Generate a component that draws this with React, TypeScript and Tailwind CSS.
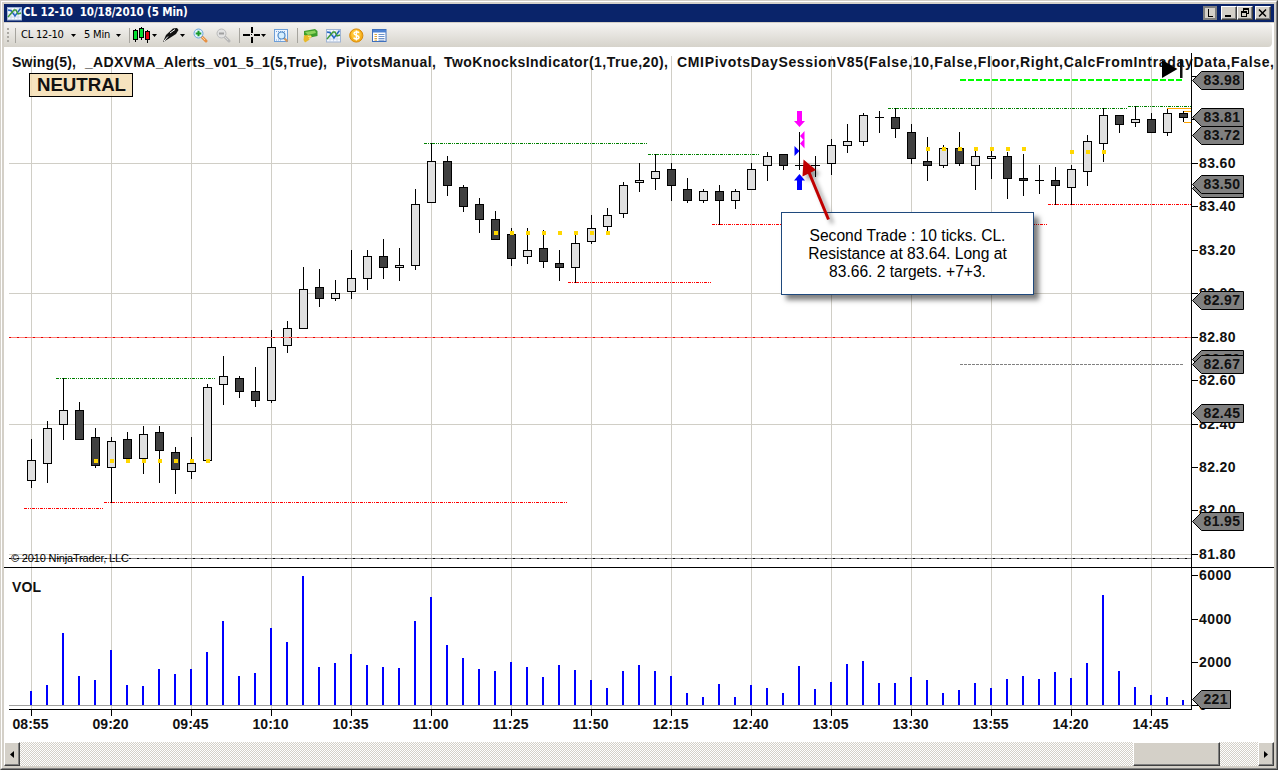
import React from "react";

type Candle = [number, number, number, number, 0 | 1 | 2];

// high, body top, body bottom, low, kind (0 = up, 1 = down, 2 = doji)
const CANDLES: Candle[] = [
  [439, 460, 481, 488, 0], [421, 428, 464, 483, 0], [378, 410, 425, 440, 0], [402, 410, 440, 440, 1],
  [428, 437, 466, 468, 1], [437, 441, 468, 503, 0], [432, 439, 459, 459, 1], [426, 434, 459, 474, 0],
  [426, 432, 451, 483, 1], [447, 452, 470, 494, 1], [437, 463, 472, 479, 0], [384, 387, 461, 461, 0],
  [356, 376, 385, 405, 0], [376, 378, 392, 398, 1], [367, 391, 401, 407, 1], [330, 347, 401, 403, 0],
  [321, 328, 346, 353, 0], [267, 289, 329, 329, 0], [269, 287, 299, 307, 1], [280, 293, 299, 301, 0],
  [250, 278, 292, 299, 0], [250, 256, 279, 290, 0], [239, 256, 268, 279, 1], [248, 265, 268, 281, 0],
  [189, 204, 266, 270, 0], [143, 161, 203, 203, 0], [156, 161, 186, 196, 1], [185, 187, 207, 212, 1],
  [198, 204, 220, 233, 1], [211, 219, 240, 240, 1], [228, 234, 259, 266, 1], [228, 250, 257, 264, 0],
  [230, 248, 262, 268, 1], [250, 263, 268, 281, 1], [233, 243, 268, 283, 0], [215, 228, 242, 244, 0],
  [208, 215, 227, 231, 0], [182, 185, 214, 218, 0], [163, 180, 183, 192, 0], [154, 171, 179, 190, 0],
  [163, 169, 186, 201, 1], [178, 189, 201, 203, 1], [189, 191, 201, 203, 0], [185, 191, 201, 225, 1],
  [189, 191, 201, 209, 0], [163, 169, 190, 190, 0], [152, 156, 166, 181, 0], [154, 154, 166, 170, 1],
  [132, 165, 166, 170, 2], [156, 165, 166, 177, 2], [139, 145, 164, 175, 0], [124, 141, 146, 153, 0],
  [113, 115, 142, 146, 0], [111, 117, 118, 133, 2], [108, 117, 129, 138, 1], [124, 132, 159, 164, 1],
  [137, 161, 166, 181, 1], [145, 148, 166, 168, 0], [132, 148, 164, 166, 1], [151, 156, 166, 190, 0],
  [150, 156, 159, 179, 0], [152, 156, 179, 199, 1], [154, 178, 181, 196, 1], [165, 180, 181, 194, 2],
  [167, 180, 186, 205, 1], [165, 169, 188, 205, 0], [135, 141, 172, 186, 0], [108, 115, 144, 162, 0],
  [115, 115, 125, 133, 1], [106, 119, 123, 127, 0], [113, 119, 133, 133, 1], [109, 113, 133, 136, 0],
  [111, 113, 118, 122, 1],
];

const VOLUME_TOPS = [
  691, 685, 633, 676, 680, 650, 685, 686, 669, 674, 669, 652, 621, 676, 673, 628, 642, 576, 667, 663,
  654, 665, 667, 668, 621, 597, 645, 658, 669, 671, 662, 667, 677, 665, 670, 680, 688, 671, 665, 671,
  676, 693, 697, 684, 697, 685, 688, 693, 666, 689, 682, 664, 661, 683, 683, 677, 680, 693, 690, 683,
  688, 679, 676, 679, 672, 678, 663, 595, 671, 687, 695, 697, 700,
];

const TIMES = [
  "08:55", "09:20", "09:45", "10:10", "10:35", "11:00", "11:25", "11:50",
  "12:15", "12:40", "13:05", "13:30", "13:55", "14:20", "14:45",
];

const PRICES: [number, string][] = [
  [163, "83.60"], [206, "83.40"], [250, "83.20"], [293, "83.00"], [337, "82.80"],
  [380, "82.60"], [424, "82.40"], [467, "82.20"], [510, "82.00"], [554, "81.80"],
];

const VOLUMES: [number, string][] = [[575, "6000"], [619, "4000"], [662, "2000"], [705, "0"]];

const TAGS: [number, string, number][] = [
  [71, "83.98", 1243.5], [108, "83.81", 1243.5], [126, "83.72", 1243.5], [179, "", 1243.5],
  [175, "83.50", 1243.5], [291, "82.97", 1243.5], [350, "82.70", 1243.5], [355, "82.67", 1243.5],
  [404, "82.45", 1243.5], [512, "81.95", 1243.5], [690, "221", 1230.5],
];

const SWINGS: [number, number, number, string][] = [
  [24, 103, 508, "#f00"], [56, 215, 378, "#008000"], [104, 567, 502, "#f00"], [424, 647, 143, "#008000"],
  [568, 711, 282, "#f00"], [648, 760, 154, "#008000"], [712, 1047, 224, "#f00"], [888, 1127, 108, "#008000"],
  [1128, 1191, 106, "#008000"], [1048, 1191, 204, "#f00"],
];

const DOTS: [number, number, number][] = [[4, 11, 459], [29, 36, 231], [56, 62, 147], [65, 67, 150]];

const INDICATORS: [number, number, string][] = [
  [12, 64, "Swing(5),"],
  [85, 242, "_ADXVMA_Alerts_v01_5_1(5,True),"],
  [336, 100, "PivotsManual,"],
  [444, 224, "TwoKnocksIndicator(1,True,20),"],
  [677, 597, "CMIPivotsDaySessionV85(False,10,False,Floor,Right,CalcFromIntradayData,False,"],
];

const range = (a: number, b: number) => Array.from({ length: b - a + 1 }, (_, k) => a + k);

function Chart() {
  return (
    <svg
      className="block"
      width="1270"
      height="694"
      viewBox="4 48 1270 694"
      fontFamily='"Liberation Sans", Arial, sans-serif'
      fontWeight="bold"
      fontSize="14"
      fill="#111"
    >
      <rect x="4" y="48" width="1270" height="694" fill="#fff" />
      <g shapeRendering="crispEdges" fill="#d0cec6">
        {TIMES.map((t, k) => (
          <rect key={t} x={31 + 80 * k} y="56" width="1" height="653" />
        ))}
        {[163, 293, 424, 554].map((y) => (
          <rect key={y} x="9" y={y} width="1183" height="1" />
        ))}
      </g>

      {INDICATORS.map(([x, w, s]) => (
        <text key={s} x={x} y="67" textLength={w}>{s}</text>
      ))}

      <g shapeRendering="crispEdges">
        {CANDLES.map(([h, t, b, l, kind], i) => {
          const x = 31 + 16 * i;
          return (
            <g key={i}>
              <rect x={x} y={h} width="1" height={l - h} fill="#000" />
              <rect x={x - 4} y={t} width="9" height={b - t} fill="#000" />
              {kind !== 2 && (
                <rect x={x - 3} y={t + 1} width="7" height={b - t - 2} fill={kind === 1 ? "#404040" : "#e0e0e0"} />
              )}
            </g>
          );
        })}

        <g strokeWidth="1" fill="none">
          <path d="M9 337.5H1191" stroke="#ff8078" />
          <path d="M9 337.5H1191" stroke="#e00000" strokeDasharray="2 6" />
          <path d="M9 558.5H1191" stroke="#808080" />
          <path d="M9 558.5H1191" stroke="#000" strokeDasharray="2 6" />
          <path d="M960 364.5H1183" stroke="#808080" strokeDasharray="3 1" />
          {SWINGS.map(([a, b, y, c]) => (
            <path key={`${a}-${y}`} d={`M${a} ${y + 0.5}H${b}`} stroke={c} strokeDasharray="3 1 1 1 1 1" />
          ))}
          <path d="M1167 108.5H1191M1184 111.5H1191M1184 122.5H1191" stroke="#ffa500" />
        </g>
        <path d="M960 80H1183" stroke="#00ff00" strokeWidth="2" strokeDasharray="6 2" />

        {DOTS.flatMap(([a, b, y]) =>
          range(a, b).map((i) => <rect key={i} x={30 + 16 * i} y={y} width="4" height="4" fill="#ffd700" />),
        )}

        {VOLUME_TOPS.map((y, i) => (
          <rect key={i} x={30 + 16 * i} y={y} width="2" height={705 - y} fill="#00f" />
        ))}

        <rect x="9" y="705" width="1183" height="1" fill="#a0a0a0" />
        <g fill="#000">
          <rect x="4" y="567" width="1270" height="1" />
          <rect x="9" y="709" width="1183" height="1" />
          <rect x="1191" y="53" width="1" height="657" />
          {TIMES.map((t, k) => (
            <rect key={t} x={31 + 80 * k} y="709" width="1" height="7" />
          ))}
          {[76, 119, ...PRICES.map((p) => p[0]), ...VOLUMES.map((v) => v[0])].map((y) => (
            <rect key={y} x="1192" y={y} width="6" height="1" />
          ))}
        </g>
      </g>

      {PRICES.map(([y, s]) => (
        <text key={s} x="1199" y={y + 5} textLength="36.5">{s}</text>
      ))}
      {VOLUMES.map(([y, s]) => (
        <text key={s} x="1199" y={y + 5} textLength={s.length * 8.1}>{s}</text>
      ))}
      {TIMES.map((t, k) => (
        <text key={t} x={12.5 + 80 * k} y="728.5" textLength="36">{t}</text>
      ))}
      {TAGS.map(([y, s, r]) => (
        <g key={y}>
          <path
            d={`M1192.5 ${y + 9.5}L1201.5 ${y + 0.5}H${r}V${y + 18.5}H1201.5Z`}
            fill="#808080"
            stroke="#000"
          />
          {s && <text x="1203.5" y={y + 14} textLength={s === "221" ? 24 : 36.5}>{s}</text>}
        </g>
      ))}

      <rect x="29.5" y="73.5" width="103" height="23" fill="#f5deb3" fillOpacity="0.85" stroke="#000" />
      <text x="37" y="91" fontSize="18.7" textLength="89">NEUTRAL</text>
      <text x="12" y="592" textLength="29">VOL</text>
      <text x="11" y="562" fontSize="11" fontWeight="normal" fill="#000" textLength="118">
        © 2010 NinjaTrader, LLC
      </text>

      <path d="M1162 60L1177.5 69L1162 78Z" fill="#000" />
      <rect x="1180" y="59" width="2.5" height="19" fill="#111" />

      <path d="M797 111H802V121H805L799.5 127L794 121H797Z" fill="#f0f" />
      <path d="M799.5 174L805 180.5H802V190H797V180.5H794Z" fill="#00f" />
      <path d="M800 136L804.5 131V141ZM800 143.5L804.5 138.5V148.5Z" fill="#f0f" />
      <path d="M799.5 151L794.5 146V156Z" fill="#00f" />
    </svg>
  );
}

function Callout() {
  return (
    <>
      <div className="absolute left-[777px] top-[164px] flex h-[83px] w-[253px] items-center justify-center border border-[#1f497d] bg-white text-center font-['Liberation_Sans',Arial,sans-serif] text-[15.6px] leading-[18px] text-black shadow-[5px_5px_5px_rgba(0,0,0,0.5)]">
        <div className="whitespace-nowrap">
          Second Trade : 10 ticks. CL.
          <br />
          Resistance at 83.64. Long at
          <br />
          83.66. 2 targets. +7+3.
        </div>
      </div>
      <svg className="absolute left-[787px] top-[102px] drop-shadow-[4px_4px_2px_rgba(0,0,0,0.4)]" width="60" height="76" viewBox="791 150 60 76">
        <path d="M808 170L828.5 219.5" stroke="#c00000" strokeWidth="3" />
        <path d="M803.5 159.5L802.5 176.5L816 170Z" fill="#c00000" />
      </svg>
    </>
  );
}

function Sep({ className = "" }: { className?: string }) {
  return <div className={`h-[15px] w-px shrink-0 bg-[#a6a49e] ${className}`} />;
}

function Caret({ className = "" }: { className?: string }) {
  return (
    <svg className={`shrink-0 ${className}`} width="5" height="3" viewBox="0 0 5 3">
      <path d="M0 0H5L2.5 3Z" fill="#000" />
    </svg>
  );
}

function ChartIcon({ className = "" }: { className?: string }) {
  return (
    <svg className={`shrink-0 ${className}`} width="15" height="15" viewBox="0 0 15 15">
      <rect x="0.5" y="1.5" width="14" height="12.5" fill="#f4f8ff" stroke="#9fb4d4" />
      <path d="M4 2V14M7.5 2V14M11 2V14M1 5H14M1 8H14M1 11H14" stroke="#c3d0e6" strokeWidth="0.8" />
      <path d="M1 4L4 4.5L8 10L13.5 2.5" stroke="#2667c4" strokeWidth="1.5" fill="none" />
      <path d="M1 11L4 7.5L7 4L9 4L11 8L14 7" stroke="#3d9a35" strokeWidth="1.4" fill="none" />
    </svg>
  );
}

function Magnifier({ plus, className = "" }: { plus?: boolean; className?: string }) {
  return (
    <svg className={`shrink-0 ${className}`} width="15" height="15" viewBox="0 0 15 15">
      <path d="M8.5 8.5L13 13" stroke={plus ? "#e79042" : "#b8b8b8"} strokeWidth="3" strokeLinecap="round" />
      <path d="M8 8L12 12" stroke={plus ? "#ffd29a" : "#dadada"} strokeWidth="1" />
      <circle cx="5.5" cy="5.5" r="4.5" fill={plus ? "#dff3ff" : "#e2e2e2"} stroke={plus ? "#6ba6dc" : "#bababa"} />
      <path d={plus ? "M5.5 2.7V8.3M2.7 5.5H8.3" : "M3 5.5H8"} stroke={plus ? "#1a9a2b" : "#a0a0a0"} strokeWidth="2" />
    </svg>
  );
}

function Toolbar() {
  return (
    <div className="flex h-6 w-[1268px] items-center rounded-r bg-linear-to-b from-[#f5f4f2] to-[#d6d3cb] font-['DejaVu_Sans_Condensed','DejaVu_Sans',sans-serif] text-[11px] text-black">
      <svg className="ml-[3px] shrink-0" width="2" height="14" viewBox="0 0 2 14">
        <path d="M0 0h2v2h-2zM0 4h2v2h-2zM0 8h2v2h-2zM0 12h2v2h-2z" fill="#aaa8a2" />
      </svg>
      <Sep className="ml-[6px]" />
      <span className="ml-[5px] w-[44px] shrink-0 whitespace-nowrap text-[11px] tracking-[-0.2px]">CL 12-10</span>
      <Caret className="ml-[6px]" />
      <span className="ml-[8px] w-[27px] shrink-0 whitespace-nowrap text-[11px] tracking-[-0.2px]">5 Min</span>
      <Caret className="ml-[5px]" />
      <Sep className="ml-[8px]" />
      <svg className="ml-[3px] shrink-0" width="17" height="16" viewBox="0 0 17 16" shapeRendering="crispEdges">
        <path d="M2.5 2V15M8.5 0V13M14.5 3V16" stroke="#000" />
        <rect x="0.5" y="3.5" width="4" height="9" fill="#00e030" stroke="#000" />
        <rect x="6.5" y="1.5" width="4" height="9" fill="#00e030" stroke="#000" />
        <rect x="12.5" y="4.5" width="4" height="8" fill="#e80010" stroke="#000" />
      </svg>
      <Caret className="ml-[2px]" />
      <svg className="ml-[5px] shrink-0" width="18" height="16" viewBox="0 0 18 16">
        <path d="M1 15L4 8L11 1.5L15 1L16.5 3L14 7L7 11.5Z" fill="#111" />
        <path d="M2 14L6 9.5M8 6L13 2.5" stroke="#fff" strokeWidth="1" />
      </svg>
      <Caret />
      <Magnifier plus className="ml-[8px]" />
      <Magnifier className="ml-[8px]" />
      <Sep className="ml-[8px]" />
      <svg className="ml-[3px] shrink-0" width="17" height="16" viewBox="0 0 17 16" shapeRendering="crispEdges">
        <path d="M9 0V6M9 10V16M0 8H7M11 8H17" stroke="#000" strokeWidth="2" />
        <rect x="8" y="7" width="1" height="1" fill="#000" />
      </svg>
      <Caret className="ml-px" />
      <svg className="ml-[8px] shrink-0" width="15" height="15" viewBox="0 0 15 15">
        <rect x="0.5" y="1.5" width="13" height="12" fill="#edf5ff" stroke="#6e9fd8" />
        <path d="M2 3.5H12M2 12H7" stroke="#75a4dc" strokeDasharray="1 1" />
        <path d="M10 10L13.5 13.5" stroke="#d3985d" strokeWidth="2.2" />
        <circle cx="7.5" cy="7.5" r="3.5" fill="#d6efff" stroke="#4e89c7" strokeWidth="1.2" />
      </svg>
      <Sep className="ml-[8px]" />
      <svg className="ml-[5px] shrink-0" width="15" height="15" viewBox="0 0 15 15">
        <path d="M1 3L12 1L14.5 3V8L5 10L1 7Z" fill="#3d9d2c" />
        <path d="M2 4L12 2.5L13 5L5 7Z" fill="#8cd35b" />
        <path d="M1 7.5L5 7L9 8L6 12L2 14.5L0.5 12Z" fill="#e8b928" />
        <path d="M5 8.5L8 8L6 11" stroke="#ffec82" fill="none" />
      </svg>
      <ChartIcon className="ml-[8px]" />
      <svg className="ml-[8px] shrink-0" width="15" height="15" viewBox="0 0 15 15">
        <circle cx="7.3" cy="7.5" r="6.6" fill="#f4ae1a" stroke="#d98a0b" />
        <circle cx="7" cy="6.5" r="4.8" fill="#ffc637" />
        <path d="M10 4.8C8.5 3.3 5 3.5 5 5.5S10 7 10 9.3S6 11.5 4.6 9.8M7.4 2.5V12.5" fill="none" stroke="#fff" strokeWidth="1.4" />
      </svg>
      <svg className="ml-[8px] shrink-0" width="15" height="15" viewBox="0 0 15 15">
        <rect x="0.5" y="1.5" width="13.5" height="12" fill="#fff" stroke="#3f70bd" />
        <rect x="1" y="2" width="13" height="2.5" fill="#4d82d2" />
        <path d="M2.5 6.5H5M2.5 8.5H5M2.5 10.5H5M2.5 12.2H5" stroke="#d9a441" />
        <path d="M6.5 6.5H12.5M6.5 8.5H12.5M6.5 10.5H12.5M6.5 12.2H12.5" stroke="#6d92c9" />
      </svg>
    </div>
  );
}

const raised =
  "flex shrink-0 items-center justify-center border border-b-[#404040] border-l-white border-r-[#404040] border-t-white bg-[#d4d0c8] shadow-[inset_-1px_-1px_0_#808080]";

function TitleBar() {
  return (
    <div className="flex h-[18px] items-center bg-[#0a246a] pr-[3px]">
      <ChartIcon className="ml-[3px]" />
      <span className="ml-px whitespace-pre font-['DejaVu_Sans_Condensed','DejaVu_Sans',sans-serif] text-[11.5px] font-bold leading-none tracking-[-0.13px] text-white">
        {"CL 12-10  10/18/2010 (5 Min)"}
      </span>
      <div className="ml-auto flex h-[14px] w-[14px] items-center justify-center border-2 border-[#808080] bg-[#d4d0c8]">
        <svg width="10" height="10" viewBox="0 0 10 10" shapeRendering="crispEdges">
          <path d="M3.5 1V8.5H8" stroke="#000" fill="none" />
        </svg>
      </div>
      <div className={`ml-[4px] h-[14px] w-[16px] ${raised}`}>
        <svg width="12" height="10" viewBox="0 0 12 10" shapeRendering="crispEdges">
          <rect x="2" y="7" width="6" height="2" fill="#000" />
        </svg>
      </div>
      <div className={`h-[14px] w-[16px] ${raised}`}>
        <svg width="12" height="10" viewBox="0 0 12 10" shapeRendering="crispEdges">
          <path d="M4.5 3V0.5H9.5V5.5H8M4 1.5H10" stroke="#000" fill="none" />
          <path d="M2.5 3.5H7.5V8.5H2.5ZM2 4.5H8" stroke="#000" fill="none" />
        </svg>
      </div>
      <div className={`ml-[2px] h-[14px] w-[16px] ${raised}`}>
        <svg width="12" height="10" viewBox="0 0 12 10">
          <path d="M2 1.5L9 8.5M9 1.5L2 8.5" stroke="#000" strokeWidth="1.5" />
        </svg>
      </div>
    </div>
  );
}

function ScrollBar() {
  return (
    <div className="flex h-6 bg-[repeating-conic-gradient(#d4d0c8_0_25%,#ffffff_0_50%)] bg-[length:2px_2px]">
      <div className={`w-4 ${raised}`}>
        <svg width="4" height="7" viewBox="0 0 4 7">
          <path d="M4 0V7L0 3.5Z" fill="#000" />
        </svg>
      </div>
      <div className={`ml-[1113px] w-[87px] ${raised}`} />
      <div className={`ml-auto w-4 ${raised}`}>
        <svg width="4" height="7" viewBox="0 0 4 7">
          <path d="M0 0V7L4 3.5Z" fill="#000" />
        </svg>
      </div>
    </div>
  );
}

export default function App() {
  return (
    <div className="h-[770px] w-[1278px] overflow-hidden border-b border-l border-r border-t border-b-[#404040] border-l-[#d4d0c8] border-r-[#404040] border-t-[#d4d0c8]">
      <div className="h-full border border-b-[#808080] border-l-white border-r-[#808080] border-t-white bg-[#d4d0c8] pb-[2px] pl-[2px] pr-[2px] pt-[2px]">
        <div className="flex w-[1270px] flex-col">
          <TitleBar />
          <div className="h-px bg-[#d4d0c8]" />
          <div className="bg-white">
            <Toolbar />
          </div>
          <div className="h-px bg-white" />
          <div className="relative h-[694px]">
            <Chart />
            <Callout />
          </div>
          <ScrollBar />
        </div>
      </div>
    </div>
  );
}
